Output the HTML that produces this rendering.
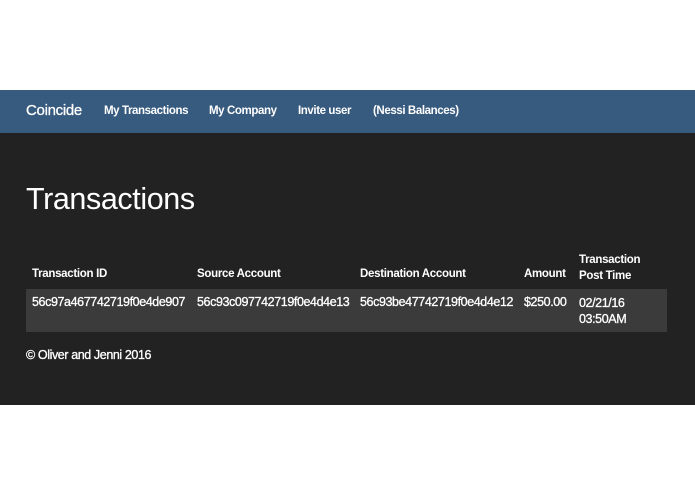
<!DOCTYPE html>
<html><head><meta charset="utf-8"><style>
body{margin:0;width:695px;height:494px;background:#fff;position:relative;overflow:hidden;font-family:"Liberation Sans",sans-serif;color:#fff}
.a{position:absolute;white-space:nowrap}
#nav{position:absolute;left:0;top:90px;width:695px;height:43px;background:#375a7f}
#main{position:absolute;left:0;top:133px;width:695px;height:272px;background:#222}
#row{position:absolute;left:26px;top:289px;width:641px;height:43px;background:#3b3b3b}
.n{font-size:11.5px;top:105px;letter-spacing:-0.4px;font-weight:bold}
.h{font-size:11.5px;font-weight:bold;letter-spacing:-0.3px}
.c{font-size:12.5px;letter-spacing:-0.4px;-webkit-text-stroke:0.3px #fff}
</style></head><body>
<div id="nav"></div><div id="main"></div><div id="row"></div>
<div class="a" style="left:26px;top:102px;font-size:15px;letter-spacing:-0.3px;-webkit-text-stroke:0.3px #fff">Coincide</div>
<div class="a n" style="left:104px">My Transactions</div>
<div class="a n" style="left:209px">My Company</div>
<div class="a n" style="left:298px">Invite user</div>
<div class="a n" style="left:373px">(Nessi Balances)</div>
<div class="a" style="left:26px;top:182px;font-size:30.5px;letter-spacing:-0.4px">Transactions</div>
<div class="a h" style="left:32px;top:268px">Transaction ID</div>
<div class="a h" style="left:197px;top:268px">Source Account</div>
<div class="a h" style="left:360px;top:268px">Destination Account</div>
<div class="a h" style="left:524px;top:268px">Amount</div>
<div class="a h" style="left:579px;top:252px;line-height:16px">Transaction<br>Post Time</div>
<div class="a c" style="left:32px;top:295px">56c97a467742719f0e4de907</div>
<div class="a c" style="left:197px;top:295px">56c93c097742719f0e4d4e13</div>
<div class="a c" style="left:360px;top:295px">56c93be47742719f0e4d4e12</div>
<div class="a c" style="left:524px;top:295px">$250.00</div>
<div class="a c" style="left:579px;top:295px;line-height:16px">02/21/16<br>03:50AM</div>
<div class="a c" style="left:26px;top:348px">© Oliver and Jenni 2016</div>
</body></html>
